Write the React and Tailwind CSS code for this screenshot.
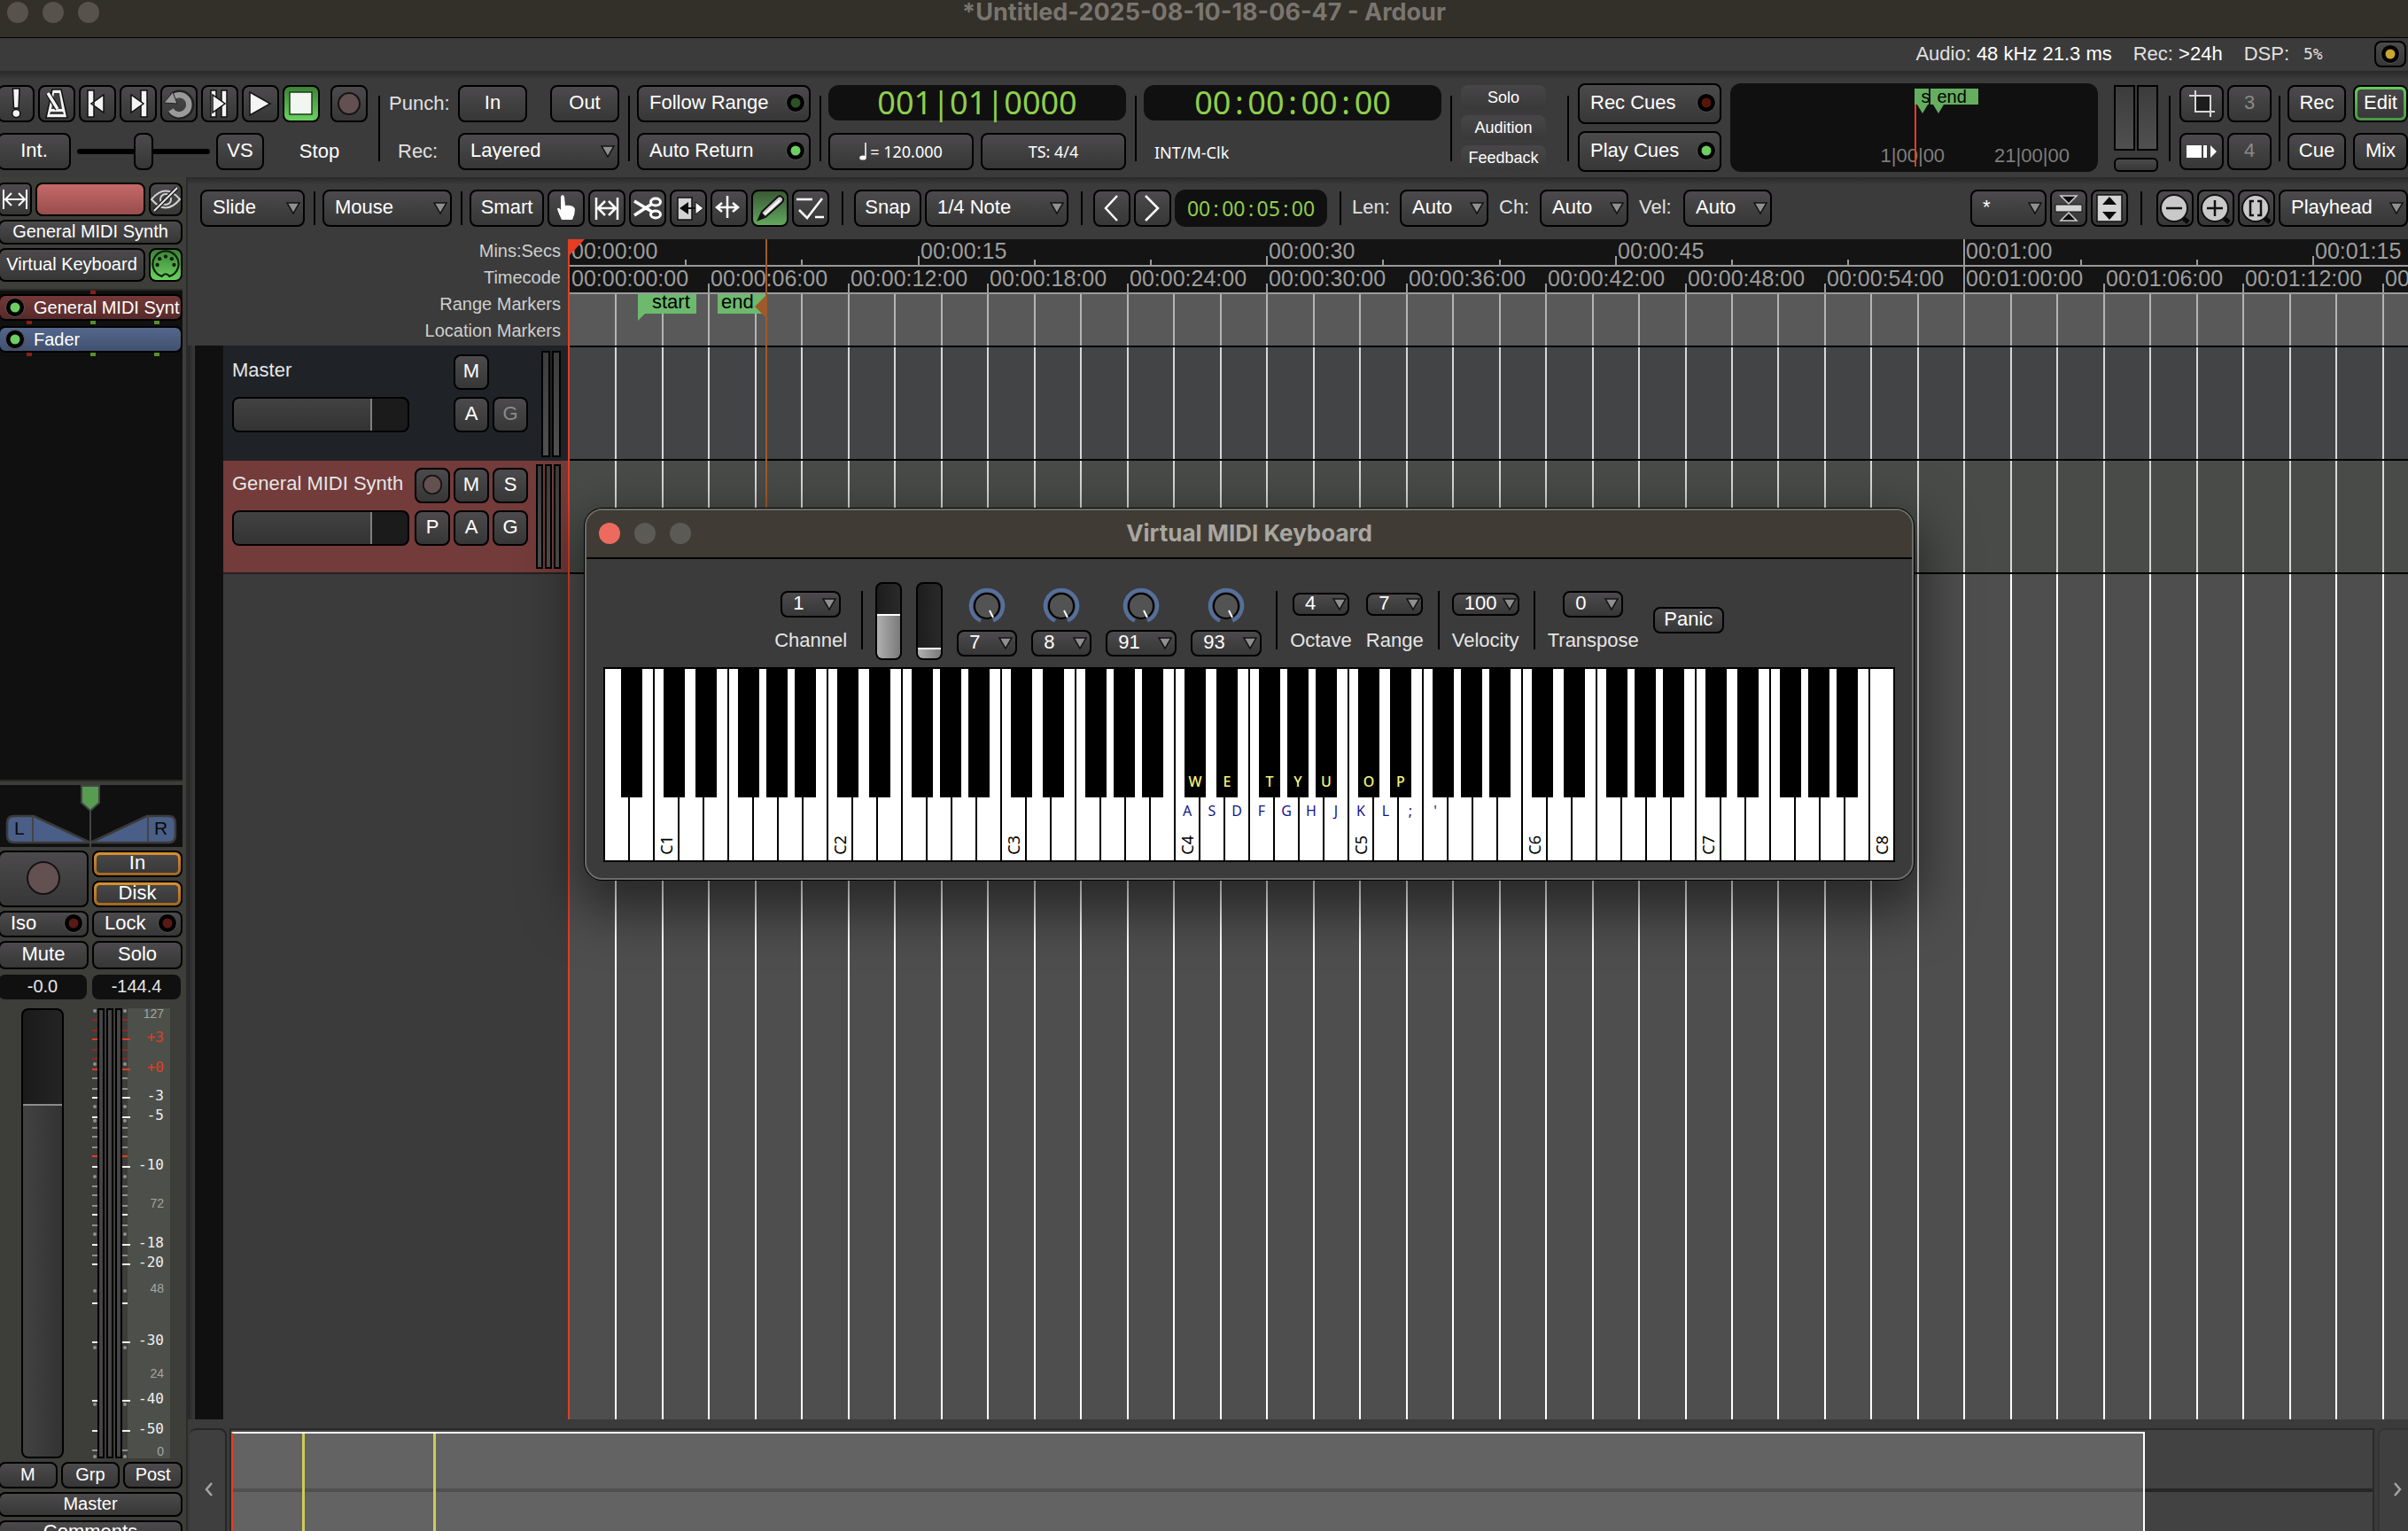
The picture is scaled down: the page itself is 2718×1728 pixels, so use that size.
import React from "react";

const cx = (...c) => c.filter(Boolean).join(" ");

const face = "border-2 border-black bg-linear-to-b from-[#4c4a4c] to-[#373737] text-white";

function Btn({ className = "", children, ...rest }) {
  return (
    <button className={cx(face, "flex shrink-0 items-center justify-center rounded-lg pb-0.5 text-[22px] leading-6", className)} {...rest}>
      {children}
    </button>
  );
}

function Pick({ label, value, className = "", pad = "pl-3", tri = "right-1" }) {
  return (
    <div className={cx("relative shrink-0", className)}>
      <select
        aria-label={label}
        defaultValue={value}
        className={cx(face, "block h-full w-full appearance-none rounded-lg pb-0.5 text-[22px] leading-5", pad)}
      >
        <option>{value}</option>
      </select>
      <svg viewBox="0 0 18 16" className={cx("pointer-events-none absolute top-1/2 h-4 w-[18px] -translate-y-1/2", tri)}>
        <path d="M2 2H16L9 14Z" fill="#8f8f8f" stroke="#141414" strokeWidth="1.5" />
      </svg>
    </div>
  );
}

const Sep = ({ className = "" }) => <div className={cx("w-0.5 shrink-0 bg-black", className)} />;

const Led = ({ color }) => (
  <svg viewBox="0 0 22 22" className="h-[22px] w-[22px] shrink-0">
    <circle cx="11" cy="11" r="10.5" fill="#000" stroke="#555" strokeWidth="1" />
    <circle cx="11" cy="11" r="5.5" fill={color} />
  </svg>
);

const Icon = ({ children, className = "h-[42px] w-[42px]", box = "0 0 42 42" }) => (
  <svg viewBox={box} className={cx("shrink-0", className)} fill="none">
    {children}
  </svg>
);

const IconBtn = ({ label, className = "w-[42px]", children }) => (
  <Btn aria-label={label} className={cx("h-[42px] overflow-hidden p-0!", className)}>
    {children}
  </Btn>
);

const Clock = ({ fields, sep, className, sepClass }) => (
  <div className={cx("flex items-center justify-center rounded-xl bg-[#101010] font-['Noto_Sans',sans-serif] text-[#8fcf4b]", className)}>
    {fields.map((f, i) => (
      <React.Fragment key={i}>
        {i > 0 && <span className={cx("text-center", sepClass)}>{sep}</span>}
        <span>{f}</span>
      </React.Fragment>
    ))}
  </div>
);

const RecDot = ({ r = 12, size = "h-[42px] w-[42px]" }) => (
  <Icon className={size}>
    <circle cx="21" cy="21" r={r} fill="#635051" stroke="#161214" strokeWidth="2" />
  </Icon>
);

/* ---------- top bars ---------- */

function TitleBar() {
  return (
    <header className="flex h-[43px] shrink-0 border-b border-black bg-[#332f29]">
      <div className="flex w-80 gap-4 pl-2 pt-0.5">
        {["Close", "Minimise", "Zoom"].map((n) => (
          <button key={n} aria-label={n} className="h-6 w-6 rounded-full bg-[#57534c]" />
        ))}
      </div>
      <h1 className="flex-1 text-center font-['Inter',sans-serif] text-[27px] font-bold leading-7 text-[#79756f]">
        *Untitled-2025-08-10-18-06-47 - Ardour
      </h1>
      <div className="w-80" />
    </header>
  );
}

function StatusBar() {
  return (
    <div className="flex h-[37px] shrink-0 items-center justify-end bg-[#3b3b3b] pb-0.5 text-[22px] leading-6 text-[#e0e0e0]">
      <p>
        Audio: <span className="text-white">48 kHz 21.3 ms</span>
      </p>
      <p className="ml-6">
        Rec: <span className="text-white">&gt;24h</span>
      </p>
      <p className="ml-6">DSP:</p>
      <p className="ml-4 w-8 font-['DejaVu_Sans_Mono',monospace] text-lg leading-6">5%</p>
      <Btn aria-label="Log" className="ml-12 mr-0.5 h-[30px] w-9 p-0!">
        <Led color="#c9a531" />
      </Btn>
    </div>
  );
}

function Transport() {
  const w = { fill: "#f4f4f4", stroke: "#111", strokeWidth: 1.5 };
  return (
    <div className="flex h-[120px] shrink-0 bg-linear-to-b from-[#292929] via-[#3b3b3b] via-8% to-[#3b3b3b] pt-4">
      <div className="-ml-[3px] flex shrink-0 flex-col gap-3">
        <div className="flex gap-1">
          <IconBtn label="Panic">
            <Icon>
              <path d="M17.500 4H25L24 26H18.500Z" {...w} />
              <circle cx="21.300" cy="32" r="4.500" {...w} />
            </Icon>
          </IconBtn>
          <IconBtn label="Metronome">
            <Icon>
              <path d="M9 37L16 5H26L33 37Z" {...w} />
              <path d="M18 9H24L27 27H15ZM14 30H28L29 33H13Z" fill="#3f3f3f" />
              <path d="M11 9L22 27" stroke="#111" strokeWidth="6" />
              <path d="M11 9L22 27" stroke="#f4f4f4" strokeWidth="3.500" />
            </Icon>
          </IconBtn>
          <IconBtn label="Go to start">
            <Icon>
              <path d="M10 6H17V36H10ZM28 11V31L14 21Z" {...w} />
            </Icon>
          </IconBtn>
          <IconBtn label="Go to end">
            <Icon>
              <path d="M24 6H31V36H24Z" {...w} />
              <path d="M13 11V31L27 21Z" {...w} />
            </Icon>
          </IconBtn>
          <IconBtn label="Loop">
            <Icon>
              <path d="M14 13A12 12 0 1 1 12 29" stroke="#222" strokeWidth="9" />
              <path d="M14 14A11 11 0 1 1 12 28" stroke="#9a9a9a" strokeWidth="6.500" />
              <path d="M4 20L14 8L19 21Z" fill="#9a9a9a" stroke="#222" />
            </Icon>
          </IconBtn>
          <IconBtn label="Play range">
            <Icon>
              <path d="M11 6H17V36H11Z" {...w} />
              <path d="M23 6H29V36H23Z" {...w} />
              <path d="M13 11V31L27 21Z" {...w} />
            </Icon>
          </IconBtn>
          <IconBtn label="Play">
            <Icon>
              <path d="M9 8V34L32 21Z" {...w} />
            </Icon>
          </IconBtn>
          <IconBtn label="Stop" className="w-[42px] from-[#3d8236]! to-[#6ad260]!">
            <Icon>
              <path d="M8 8H33V33H8Z" fill="#f1f7f0" stroke="#1c3a19" strokeWidth="1.500" />
            </Icon>
          </IconBtn>
          <IconBtn label="Record" className="ml-2 w-[42px]">
            <RecDot />
          </IconBtn>
        </div>
        <div className="flex items-center">
          <Btn className="h-[42px] w-[83px]">Int.</Btn>
          <div className="ml-[7px] flex h-[42px] w-[150px] items-center">
            <div className="h-1.5 flex-1 rounded-l bg-black" />
            <div className={cx(face, "h-[42px] w-[22px] rounded-lg")} />
            <div className="h-1.5 flex-1 rounded-r bg-black" />
          </div>
          <Btn className="ml-[7px] h-[42px] w-[54px]">VS</Btn>
          <span className="flex-1 pb-0.5 pl-2 text-center text-[22px] text-white">Stop</span>
        </div>
      </div>

      <Sep className="ml-3 mt-3 h-[74px]" />

      <div className="ml-[10px] flex w-[260px] shrink-0 flex-col gap-3 text-[22px] text-[#e0e0e0]">
        <div className="flex items-center justify-between">
          <span className="w-[78px] pb-0.5">Punch:</span>
          <Btn className="h-[42px] w-[78px]">In</Btn>
          <Btn className="ml-[26px] h-[42px] w-[78px]">Out</Btn>
        </div>
        <div className="flex items-center justify-between">
          <span className="pb-0.5 pl-2.5">Rec:</span>
          <Pick label="Record mode" value="Layered" className="h-[42px] w-[182px]" />
        </div>
      </div>

      <Sep className="ml-2.5 mt-3 h-[74px]" />

      <div className="ml-2 flex w-[196px] shrink-0 flex-col gap-3">
        <Btn className="h-[42px] justify-between! pl-3 pr-1">
          Follow Range <Led color="#2c5226" />
        </Btn>
        <Btn className="h-[42px] justify-between! pl-3 pr-1">
          Auto Return <Led color="#6dce62" />
        </Btn>
      </div>

      <Sep className="ml-2.5 mt-3 h-[74px]" />

      <div className="ml-2 flex w-[336px] shrink-0 flex-col gap-3.5 font-['Noto_Sans',sans-serif]">
        <Clock fields={["001", "01", "0000"]} sep="|" className="h-10 text-[36px] leading-10" sepClass="w-5" />
        <div className="flex gap-2">
          <Btn className="h-[42px] flex-1 gap-1 pt-0.5 text-lg!">
            <svg viewBox="0 0 8 20" className="h-5 w-2">
              <path d="M7 0V16" stroke="#fff" strokeWidth="1.500" />
              <ellipse cx="4" cy="17" rx="3.800" ry="2.600" fill="#fff" />
            </svg>
            = 120.000
          </Btn>
          <Btn className="h-[42px] flex-1 pt-0.5 text-lg!">TS: 4/4</Btn>
        </div>
      </div>

      <Sep className="ml-2.5 mt-3 h-[74px]" />

      <div className="ml-2 flex w-[336px] shrink-0 flex-col gap-3.5">
        <Clock fields={["00", "00", "00", "00"]} sep=":" className="h-10 text-[36px] leading-10" sepClass="w-[19px]" />
        <p className="pl-3 pt-2 font-['Noto_Sans',sans-serif] text-lg leading-7 text-white">INT/M-Clk</p>
      </div>

      <Sep className="ml-2.5 mt-3 h-[74px]" />

      <div className="ml-2.5 flex w-24 shrink-0 flex-col gap-1.5">
        {["Solo", "Audition", "Feedback"].map((t) => (
          <button key={t} className="h-7 rounded-lg bg-linear-to-b from-[#484648] to-[#393939] text-lg leading-7 text-white">
            {t}
          </button>
        ))}
      </div>

      <Sep className="ml-6 mt-3 h-[74px]" />

      <div className="-mt-0.5 ml-2.5 flex w-[162px] shrink-0 flex-col gap-2">
        <Btn className="h-[46px] justify-between! pl-3 pr-1">
          Rec Cues <Led color="#57150c" />
        </Btn>
        <Btn className="h-[46px] justify-between! pl-3 pr-1">
          Play Cues <Led color="#6dce62" />
        </Btn>
      </div>

      <div className="relative -mt-0.5 ml-2.5 h-[100px] min-w-0 flex-1 overflow-hidden rounded-xl bg-[#101010] text-xl">
        <div className="absolute bottom-2 left-1/2 -ml-[38px] flex gap-14 text-[22px] leading-5 text-[#7d7d7d]">
          <span>1|00|00</span>
          <span>21|00|00</span>
        </div>
        <div className="absolute left-1/2 top-6 h-[70px] w-0.5 bg-[#e43d23]" />
        <div className="absolute left-1/2 top-1.5 flex gap-0.5 leading-[18px] text-black">
          <div>
            <p className="h-[18px] w-4 overflow-hidden bg-[#65ae60] pl-2">s</p>
            <svg viewBox="0 0 16 10" className="h-2.5 w-4">
              <path d="M3 0H15L9 10Z" fill="#65ae60" />
            </svg>
          </div>
          <div>
            <p className="h-[18px] w-[54px] bg-[#65ae60] pl-2">end</p>
            <svg viewBox="0 0 16 10" className="h-2.5 w-4">
              <path d="M3 0H15L9 10Z" fill="#65ae60" />
            </svg>
          </div>
        </div>
      </div>

      <div className="ml-[18px] flex w-[50px] shrink-0 flex-col gap-2">
        <div className="flex h-[74px] gap-0.5">
          <div className="flex-1 border-2 border-black bg-linear-to-b from-[#3c3c3c] to-[#505050]" />
          <div className="flex-1 border-2 border-black bg-linear-to-b from-[#3c3c3c] to-[#505050]" />
        </div>
        <Btn aria-label="Peak" className="h-4 rounded-md!" />
      </div>

      <Sep className="ml-3 mt-3 h-[74px]" />

      <div className="ml-2.5 grid shrink-0 grid-cols-[50px_50px] content-start gap-x-1 gap-y-3">
        <IconBtn label="Trim layout" className="w-full">
          <Icon>
            <path d="M14 12H32V30H14Z" fill="#1d1d1d" />
            <path d="M14 6V30H36M7 12H31V36" stroke="#d8d8d8" strokeWidth="2" />
          </Icon>
        </IconBtn>
        <Btn className="h-[42px] w-full text-[#8a8a8a]!">3</Btn>
        <IconBtn label="Clip view" className="w-full">
          <Icon>
            <path d="M4 14H21V28H4ZM23 14H27V28H23ZM31 14L38 21L31 28Z" fill="#fff" />
          </Icon>
        </IconBtn>
        <Btn className="h-[42px] w-full text-[#8a8a8a]!">4</Btn>
      </div>

      <Sep className="ml-2 mt-3 h-[74px]" />

      <div className="ml-2 grid shrink-0 grid-cols-[66px_62px] content-start gap-x-2 gap-y-3">
        <Btn className="h-[42px] w-full">Rec</Btn>
        <Btn className="h-[42px] w-full from-[#66c95c]! to-[#4a9642]! p-[3px]!">
          <span className="flex h-full w-full items-center justify-center rounded bg-linear-to-b from-[#484648] to-[#393939] pb-0.5">Edit</span>
        </Btn>
        <Btn className="h-[42px] w-full">Cue</Btn>
        <Btn className="h-[42px] w-full">Mix</Btn>
      </div>
    </div>
  );
}

/* ---------- mixer strip ---------- */

const TICKS = [
  [12, "#8c2a22", 0], [24, "#8c2a22", 0], [34, "#e43d23", 1], [46, "#8c2a22", 0], [56, "#8c2a22", 0], [68, "#e43d23", 1],
  [78, "#909090", 0], [90, "#909090", 0], [100, "#f0f0f0", 1], [122, "#f0f0f0", 1], [134, "#909090", 0], [144, "#909090", 0],
  [156, "#909090", 0], [166, "#e43d23", 0], [178, "#f0f0f0", 1], [200, "#909090", 0], [210, "#909090", 0], [222, "#909090", 0],
  [232, "#f0f0f0", 0], [244, "#909090", 0], [266, "#f0f0f0", 1], [278, "#909090", 0], [288, "#f0f0f0", 1], [332, "#f0f0f0", 0],
  [376, "#f0f0f0", 1], [442, "#f0f0f0", 1], [476, "#f0f0f0", 1], [498, "#909090", 0],
];
const DOTS = [3, 63, 111, 127, 190, 255, 319, 383, 447, 506];
const DB = [
  ["+3", 34, "#e43d23"], ["+0", 68, "#e43d23"], ["-3", 100, "#f0f0f0"], ["-5", 122, "#f0f0f0"], ["-10", 178, "#f0f0f0"],
  ["-18", 266, "#f0f0f0"], ["-20", 288, "#f0f0f0"], ["-30", 376, "#f0f0f0"], ["-40", 442, "#f0f0f0"], ["-50", 476, "#f0f0f0"],
];
const MIDI = [["127", 6], ["72", 220], ["48", 316], ["24", 412], ["0", 500]];

function MeterScale() {
  return (
    <svg viewBox="0 0 88 508" className="h-[508px] w-[88px] shrink-0 overflow-visible">
      <rect x="40" width="48" height="508" fill="#4d4f4a" />
      {[6, 16, 26].map((x) => (
        <g key={x}>
          <rect x={x} width="8" height="508" fill="#000" />
          <rect x={x + 2} y="2" width="4" height="504" fill="#464446" />
        </g>
      ))}
      {TICKS.map(([y, c, major]) => (
        <g key={y} fill={c}>
          <rect x="0" y={y} width="6" height="2" />
          <rect x="34" y={y} width={major ? 9 : 6} height="2" />
        </g>
      ))}
      {DOTS.map((y) => (
        <g key={y} fill="#909090">
          <circle cx="3" cy={y} r="2" />
          <circle cx="37" cy={y} r="2" />
        </g>
      ))}
      <g textAnchor="end" fontFamily="DejaVu Sans Mono, monospace" fontSize="16">
        {DB.map(([t, y, c]) => (
          <text key={t} x="81" y={y + 4} fill={c}>{t}</text>
        ))}
      </g>
      <g textAnchor="end" fontFamily="Liberation Sans, sans-serif" fontSize="14" fill="#a5a6a2">
        {MIDI.map(([t, y]) => (
          <text key={t} x="81" y={y + 5}>{t}</text>
        ))}
      </g>
    </svg>
  );
}

const Pins = ({ red = [], green = [] }) => (
  <svg viewBox="0 0 206 4" className="h-1 w-[206px]">
    {red.map((x) => <rect key={x} x={x} width="6" height="4" fill="#8b1f17" />)}
    {green.map((x) => <rect key={x} x={x} width="6" height="4" fill="#5a8f2a" />)}
  </svg>
);

function MixerStrip() {
  return (
    <aside className="flex w-[212px] shrink-0 flex-col border-r-2 border-[#2b2b2b] bg-[#3d3e39] pr-1 pt-1.5">
      <div className="-ml-0.5 flex h-[38px] gap-1">
        <IconBtn label="Strip width" className="h-full! w-[38px] rounded-md!">
          <Icon>
            <path d="M8 10V32M34 10V32M10 21H32M17 14L10 21L17 28M25 14L32 21L25 28" stroke="#fff" strokeWidth="2" />
          </Icon>
        </IconBtn>
        <button aria-label="Track colour" className="flex-1 rounded-lg border-2 border-black bg-linear-to-b from-[#c56a69] to-[#984d4c]" />
        <IconBtn label="Hide strip" className="h-full! w-[38px]">
          <Icon>
            <path d="M5 21Q21 2 37 21Q21 40 5 21Z" stroke="#d0d0d0" strokeWidth="2" />
            <circle cx="21" cy="21" r="6" stroke="#d0d0d0" strokeWidth="2" />
            <path d="M8 34L34 8" stroke="#222" strokeWidth="5" />
            <path d="M8 34L34 8" stroke="#e6e6e6" strokeWidth="2" />
          </Icon>
        </IconBtn>
      </div>
      <Btn className="-ml-0.5 mt-1 h-7 text-xl!">General MIDI Synth</Btn>
      <div className="-ml-0.5 mt-1 flex h-[38px] gap-1">
        <Btn className="flex-1 whitespace-nowrap text-xl!">Virtual Keyboard</Btn>
        <IconBtn label="MIDI input" className="h-full! w-[38px] from-[#3d8236]! to-[#6ad260]!">
          <Icon className="h-[36px] w-[36px]">
            <path d="M16 36A17 17 0 1 1 26 36Q21 30 16 36Z" stroke="#0c2009" strokeWidth="2.500" />
            <g fill="#0c2009">
              <circle cx="10" cy="21" r="2.500" />
              <circle cx="13" cy="13" r="2.500" />
              <circle cx="21" cy="10" r="2.500" />
              <circle cx="29" cy="13" r="2.500" />
              <circle cx="32" cy="21" r="2.500" />
            </g>
          </Icon>
        </IconBtn>
      </div>

      <div className="mt-2 flex min-h-0 flex-1 flex-col border-y-2 border-[#2a2a28] bg-[#101010]">
        <Pins red={[102]} />
        <button className="-ml-0.5 flex h-[30px] items-center gap-2.5 overflow-hidden whitespace-nowrap rounded-lg border-2 border-black bg-linear-to-b from-[#743837] to-[#572a2a] pl-1.5 text-xl leading-6 text-white">
          <Led color="#6dce62" /> General MIDI Synt
        </button>
        <Pins red={[30]} green={[102, 174]} />
        <button className="-ml-0.5 mt-0.5 flex h-[30px] items-center gap-2.5 rounded-lg border-2 border-black bg-linear-to-b from-[#54678c] to-[#40506f] pl-1.5 text-xl leading-6 text-white">
          <Led color="#6dce62" /> Fader
        </button>
        <Pins red={[30]} green={[102, 174]} />
      </div>

      <svg viewBox="0 0 206 70" className="mt-1 h-[70px] w-[206px] shrink-0 bg-[#101010]">
        <path d="M38 35H16Q8 35 8 43V57Q8 65 16 65H102ZM166 35H190Q198 35 198 43V57Q198 65 190 65H102Z" fill="#4a5f87" stroke="#3b3b3b" strokeWidth="2.500" />
        <path d="M37 35V64M167 35V64M102 28V70" stroke="#444" strokeWidth="2" />
        <path d="M92 1H112V20L102 29L92 20Z" fill="#569c51" stroke="#444" strokeWidth="2" />
        <g fontFamily="Liberation Sans, sans-serif" fontSize="21" fill="#0a0a0a">
          <text x="16" y="56">L</text>
          <text x="174" y="56">R</text>
        </g>
      </svg>

      <div className="-ml-0.5 mt-1 grid grid-cols-2 gap-1">
        <Btn aria-label="Record enable" className="h-16">
          <RecDot r={18} />
        </Btn>
        <div className="flex flex-col justify-between">
          {["In", "Disk"].map((t) => (
            <Btn key={t} className="h-[30px] from-[#d8912f]! to-[#a36720]! p-[3px]!">
              <span className="h-5 w-full rounded bg-linear-to-b from-[#484648] to-[#393939] leading-[18px]">{t}</span>
            </Btn>
          ))}
        </div>
        <Btn className="h-[30px] justify-between! pl-3 pr-1">
          Iso <Led color="#571a17" />
        </Btn>
        <Btn className="h-[30px] justify-between! pl-3 pr-1">
          Lock <Led color="#571a17" />
        </Btn>
        <Btn className="h-8">Mute</Btn>
        <Btn className="h-8">Solo</Btn>
      </div>
      <div className="-ml-0.5 mt-1.5 grid grid-cols-2 gap-1.5 pr-0.5">
        {["-0.0", "-144.4"].map((t) => (
          <output key={t} className="h-7 rounded-lg bg-[#101010] text-center text-xl leading-[26px] text-[#e6e6e6]">
            {t}
          </output>
        ))}
      </div>

      <div className="mt-2.5 flex shrink-0 pl-6">
        <div className="h-[508px] w-12 overflow-hidden rounded-lg border-2 border-black bg-linear-to-r from-[#1a1a1a] to-[#242424]">
          <div className="mt-[106px] h-full border-t-2 border-[#8c8c8c] bg-linear-to-r from-[#424242] to-[#333333]" />
        </div>
        <div className="ml-8">
          <MeterScale />
        </div>
      </div>

      <div className="-ml-0.5 mt-1 grid shrink-0 grid-cols-3 gap-1">
        <Btn className="h-[30px] text-xl!">M</Btn>
        <Btn className="h-[30px] text-xl!">Grp</Btn>
        <Btn className="h-[30px] text-xl!">Post</Btn>
      </div>
      <Btn className="-ml-0.5 mt-1 h-7 text-xl!">Master</Btn>
      <Btn className="-mb-4 -ml-0.5 mt-1 h-7">Comments</Btn>
    </aside>
  );
}

/* ---------- editor ---------- */

function Toolbar() {
  const s = { stroke: "#fff", strokeWidth: 2.5 };
  return (
    <div className="flex h-[70px] shrink-0 items-start bg-linear-to-b from-[#292929] via-[#3b3b3b] via-12% to-[#3b3b3b] pl-3.5 pt-3.5 text-[22px] leading-10 text-[#e0e0e0]">
      <Pick label="Edit mode" value="Slide" className="h-[42px] w-[118px]" />
      <Sep className="ml-2.5 mt-0.5 h-[38px]" />
      <Pick label="Edit point" value="Mouse" className="ml-2 h-[42px] w-[146px]" />
      <Sep className="ml-2.5 mt-0.5 h-[38px]" />
      <div className="ml-2 flex gap-1">
        <Btn className="h-[42px] w-[84px]">Smart</Btn>
        <IconBtn label="Grab">
          <Icon>
            <path d="M15 8Q17 4 19 8L20 18Q29 17 31 22Q31 28 28 34H16Q13 28 11 22Q12 19 15 23Z" fill="#fff" />
          </Icon>
        </IconBtn>
        <IconBtn label="Range">
          <Icon>
            <path d="M9 9V34M33 9V34M11 21H31M19 13L11 21L19 29M23 13L31 21L23 29" {...s} />
          </Icon>
        </IconBtn>
        <IconBtn label="Cut">
          <Icon>
            <path d="M6 13L26 25M6 29L26 16" stroke="#fff" strokeWidth="3.500" />
            <ellipse cx="30" cy="14" rx="5.500" ry="4" stroke="#fff" strokeWidth="3" />
            <ellipse cx="30" cy="28" rx="5.500" ry="4" stroke="#fff" strokeWidth="3" />
          </Icon>
        </IconBtn>
        <IconBtn label="Stretch">
          <Icon>
            <path d="M9 9H25V34H9Z" fill="#d4d4d4" stroke="#111" strokeWidth="1.500" />
            <path d="M20 21H30" stroke="#111" strokeWidth="2" />
            <path d="M11 21L21 14V28Z" fill="#0c0c0c" />
            <path d="M29 14V28L38 21Z" fill="#fff" stroke="#111" />
          </Icon>
        </IconBtn>
        <IconBtn label="Audition">
          <Icon>
            <path d="M19 7V32M8 20H30M13 15L7 20L13 25M25 15L31 20L25 25" {...s} />
          </Icon>
        </IconBtn>
        <IconBtn label="Draw" className="w-[42px] from-[#3a5a34]! to-[#62a85e]!">
          <Icon>
            <path d="M8 34L12 25L30 8Q33 6 36 10Q37 12 34 15L16 31Z" fill="#c9c9c9" stroke="#111" strokeWidth="2" />
            <path d="M15 28L32 12" stroke="#fff" strokeWidth="2" />
            <path d="M8 34L12 26L16 30Z" fill="#111" />
          </Icon>
        </IconBtn>
        <IconBtn label="Edit contents">
          <Icon>
            <path d="M5 11H23M8 23L17 32L34 10M26 31H36" {...s} />
          </Icon>
        </IconBtn>
      </div>
      <Sep className="ml-3.5 mt-0.5 h-[38px]" />
      <Btn className="ml-3 h-[42px] w-[76px]">Snap</Btn>
      <Pick label="Grid" value="1/4 Note" className="ml-1 h-[42px] w-[162px]" />
      <Sep className="ml-3.5 mt-0.5 h-[38px]" />
      <div className="ml-3 flex gap-1">
        <IconBtn label="Nudge back">
          <Icon>
            <path d="M27 7L14 21L27 35" {...s} />
          </Icon>
        </IconBtn>
        <IconBtn label="Nudge forward">
          <Icon>
            <path d="M13 7L27 21L13 35" {...s} />
          </Icon>
        </IconBtn>
        <Clock fields={["00", "00", "05", "00"]} sep=":" className="h-[42px] w-[172px] text-[23px] leading-[42px]" sepClass="w-[13px]" />
      </div>
      <Sep className="ml-3.5 mt-0.5 h-[38px]" />
      <span className="ml-3 w-[42px]">Len:</span>
      <Pick label="Length" value="Auto" className="ml-3 h-[42px] w-[100px]" />
      <span className="ml-3 w-[34px]">Ch:</span>
      <Pick label="Channel" value="Auto" className="ml-3 h-[42px] w-[100px]" />
      <span className="ml-3 w-[38px]">Vel:</span>
      <Pick label="Velocity" value="Auto" className="ml-3 h-[42px] w-[100px]" />

      <Pick label="Visible tracks" value="*" className="ml-auto h-[42px] w-[86px]" />
      <div className="ml-1 flex gap-1">
        <IconBtn label="Shrink tracks">
          <Icon>
            <path d="M6 17H36V25H6Z" fill="#d4d4d4" stroke="#111" />
            <path d="M12 7H30L21 16ZM12 35H30L21 26Z" fill="#0c0c0c" stroke="#cfcfcf" strokeWidth="1.500" />
          </Icon>
        </IconBtn>
        <IconBtn label="Expand tracks">
          <Icon>
            <path d="M7 6H35V36H7Z" fill="#d4d4d4" stroke="#111" strokeWidth="1.500" />
            <path d="M13 17H29L21 8ZM13 25H29L21 34Z" fill="#0c0c0c" />
          </Icon>
        </IconBtn>
      </div>
      <Sep className="ml-3.5 mt-0.5 h-[38px]" />
      <div className="ml-4 flex gap-1">
        {[
          ["Zoom out", "M11 21H29"],
          ["Zoom in", "M11 21H29M20 12V30"],
          ["Zoom to session", "M18 13H14V29H18M22 13H26V29H22"],
        ].map(([n, d]) => (
          <IconBtn key={n} label={n}>
            <Icon>
              <path d="M29 31L36 37" stroke="#0a0a0a" strokeWidth="5" />
              <circle cx="20" cy="21" r="15" fill="#c9c9c9" stroke="#111" strokeWidth="2" />
              <path d={d} stroke="#111" strokeWidth="2.500" />
            </Icon>
          </IconBtn>
        ))}
      </div>
      <Pick label="Zoom focus" value="Playhead" className="ml-1 h-[42px] w-[146px]" />
    </div>
  );
}

const ORIGIN = 2;
const PPS = 26.24;
const at = (sec) => Math.round(ORIGIN + sec * PPS);
const steps = (n, by) => Array.from({ length: n }, (_, i) => i * by);
const two = (n) => String(n).padStart(2, "0");
const hms = (s) => `00:${two(Math.floor(s / 60))}:${two(s % 60)}`;

const Grid = ({ color }) =>
  steps(56, 2).slice(1).map((s) => (
    <div key={s} className={cx("absolute inset-y-0 w-0.5", color)} style={{ left: at(s) - 1 }} />
  ));

function Ruler({ every, minor, suffix = "" }) {
  return (
    <div className="relative h-[31px] shrink-0 overflow-hidden border-b-2 border-[#9a9a9a] bg-[#141414]">
      {steps(Math.ceil(79 / minor), minor).map((s) => {
        const major = s % every === 0;
        const h = s > 0 && s % 60 === 0 ? "h-full" : major ? "h-2.5" : "h-1.5";
        return (
          <React.Fragment key={s}>
            {s > 0 && <div className={cx("absolute bottom-0 w-0.5 bg-[#9a9a9a]", h)} style={{ left: at(s) - 1 }} />}
            {major && (
              <span className="absolute top-0 text-[25px] leading-[26px] text-[#9d9d9d]" style={{ left: at(s) + 2 }}>
                {hms(s) + suffix}
              </span>
            )}
          </React.Fragment>
        );
      })}
    </div>
  );
}

function TrackHeader({ name, color, bars, children }) {
  return (
    <div className={cx("flex pb-1 pl-2.5 pr-2 pt-1", color)}>
      <div className="flex w-[200px] flex-col gap-2 pt-1">
        <h2 className="h-10 whitespace-nowrap text-[22px] leading-9 text-[#e6e6e6]">{name}</h2>
        <div className="flex h-10 overflow-hidden rounded-lg border-2 border-black bg-[#1b1b1b]">
          <div className="w-[156px] border-r-2 border-[#808080] bg-linear-to-b from-[#424242] to-[#333]" />
        </div>
      </div>
      <div className="ml-1.5 grid grid-cols-[40px_40px_40px] content-start gap-x-1 gap-y-2 pt-1">{children}</div>
      <div className="ml-auto flex gap-0.5">
        {steps(bars, 1).map((i) => (
          <div key={i} className={cx("border-2 border-black bg-linear-to-b from-[#3c3c3c] to-[#505050]", bars === 2 ? "w-2.5" : "w-2")} />
        ))}
      </div>
    </div>
  );
}

function Editor() {
  return (
    <div className="flex min-h-0 flex-1 bg-[#3b3b3b]">
      <div className="flex w-[429px] shrink-0 flex-col">
        <div className="pr-2 text-right text-xl leading-[30px] text-[#cfcfcf]">
          <p className="-mt-0.5">Mins:Secs</p>
          <p>Timecode</p>
          <p>Range Markers</p>
          <p>Location Markers</p>
          <div className="h-0.5" />
        </div>
        <div className="flex flex-1">
          <div className="w-2 bg-linear-to-r from-[#262626] to-[#3b3b3b]" />
          <div className="w-8 bg-[#101010]" />
          <div className="flex-1">
            <div className="grid grid-rows-[130px_128px]">
              <TrackHeader name="Master" color="bg-[#1f2328] pt-1.5!" bars={2}>
                <Btn className="col-start-2 h-10">M</Btn>
                <Btn className="col-start-2 h-10">A</Btn>
                <Btn className="h-10 text-[#8a8a8a]!">G</Btn>
              </TrackHeader>
              <TrackHeader name="General MIDI Synth" color="border-b-2 border-[#222] bg-[#733b3a]" bars={3}>
                <Btn aria-label="Record enable" className="h-10">
                  <RecDot r={12} size="h-10 w-9" />
                </Btn>
                <Btn className="h-10">M</Btn>
                <Btn className="h-10">S</Btn>
                <Btn className="h-10">P</Btn>
                <Btn className="h-10">A</Btn>
                <Btn className="h-10">G</Btn>
              </TrackHeader>
            </div>
          </div>
        </div>
      </div>

      <div className="relative flex min-w-0 flex-1 flex-col overflow-hidden">
        <Ruler every={15} minor={5} />
        <Ruler every={6} minor={6} suffix=":00" />
        <div className="relative h-[58px] shrink-0 bg-[#595959]">
          <Grid color="bg-[#b4b4b4]" />
          <div className="absolute left-[79px] top-0 w-[66px]">
            <p className="h-[22px] bg-[#6dba6f] pl-4 text-[22px] leading-[18px] text-black">start</p>
            <svg viewBox="0 0 8 8" className="h-2 w-2">
              <path d="M0 0H8L0 8Z" fill="#6dba6f" />
            </svg>
          </div>
          <p className="absolute left-[169px] top-0 h-[22px] w-[54px] bg-[#6dba6f] pl-1 text-[22px] leading-[18px] text-black">end</p>
          <svg viewBox="0 0 14 28" className="absolute left-[211px] top-0 h-7 w-3.5">
            <path d="M14 0V28L0 14Z" fill="#a05a2a" />
          </svg>
        </div>
        <div className="relative h-[130px] shrink-0 border-y-2 border-black bg-[#424446]">
          <Grid color="bg-[#d8d8d8]" />
        </div>
        <div className="relative h-32 shrink-0 border-b-2 border-black bg-[#484b47]">
          <Grid color="bg-[#d8d8d8]" />
        </div>
        <div className="relative flex-1 bg-[#4e4e4e]">
          <Grid color="bg-white" />
        </div>
        <svg viewBox="0 0 20 20" className="absolute left-0 top-0 h-5 w-5">
          <path d="M0 0H19L0 20Z" fill="#e43d23" />
        </svg>
        <div className="absolute inset-y-0 left-0 w-0.5 bg-[#e43d23]" />
        <div className="absolute left-[223px] top-0 h-[378px] w-0.5 bg-[#a05a2a]" />
      </div>
    </div>
  );
}

function Summary() {
  return (
    <div className="flex h-[126px] shrink-0 bg-[#3b3b3b] pt-2.5">
      <button aria-label="Scroll left" className="ml-0.5 flex w-[42px] items-center justify-center rounded-t-lg border-t-2 border-r-2 border-[#262626] bg-[#3f3f3f] pl-1 pt-5">
        <svg viewBox="0 0 10 16" className="h-4 w-2.5" fill="none">
          <path d="M8 1L2 8L8 15" stroke="#a5a5a5" strokeWidth="2.500" />
        </svg>
      </button>
      <div className="ml-[3px] flex min-w-0 flex-1 border-x-2 border-t-2 border-[#2a2a2a] bg-[#424242] pt-0.5">
        <div className="relative w-full">
          <div className="absolute inset-x-0 top-16 h-1 bg-[#262626]" />
          <div className="absolute inset-y-0 left-0 w-[2160px] max-w-full border-l-2 border-r-2 border-t-2 border-t-white border-r-white border-l-[#e43d23] bg-[#636363]">
            <div className="mt-[62px] h-1 bg-[#505050]" />
          </div>
          <div className="absolute bottom-0 left-[80px] top-0.5 w-[3px] bg-[#cfca57]" />
          <div className="absolute bottom-0 left-[228px] top-0.5 w-[3px] bg-[#cfca57]" />
        </div>
      </div>
      <button aria-label="Scroll right" className="ml-1 flex w-[34px] items-center justify-center rounded-tl-lg border-l-2 border-t-2 border-[#353535] bg-[#3f3f3f] pl-2 pt-5">
        <svg viewBox="0 0 10 16" className="h-4 w-2.5" fill="none">
          <path d="M2 1L8 8L2 15" stroke="#a5a5a5" strokeWidth="2.500" />
        </svg>
      </button>
    </div>
  );
}

/* ---------- virtual keyboard window ---------- */

const Knob = () => (
  <svg viewBox="0 0 42 42" className="h-[42px] w-[42px]" fill="none">
    <path d="M14 37.500A18 18 0 1 1 28 37.500" stroke="#566f9b" strokeWidth="4.500" />
    <circle cx="21" cy="21" r="14" fill="#535353" stroke="#000" strokeWidth="2" />
    <path d="M24 26L28 34" stroke="#fff" strokeWidth="2" />
  </svg>
);

const Labeled = ({ label, value, width, small }) => (
  <div className="flex flex-col items-center pt-2.5">
    <div className="flex h-[30px] items-center">
      <Pick label={label} value={value} className={cx(width, small ? "h-[26px]" : "h-[30px]")} tri={small ? "right-0.5" : "right-1"} />
    </div>
    <span className="mt-3.5 text-[22px] leading-6 text-[#e6e6e6]">{label}</span>
  </div>
);

const Wheel = ({ label, level }) => (
  <div role="slider" aria-label={label} aria-valuenow={0} className="flex h-[88px] w-[30px] flex-col justify-end overflow-hidden rounded-lg border-2 border-black bg-linear-to-r from-[#1d1d1d] to-[#2a2a2a]">
    <div className={cx("border-t-2 border-white bg-linear-to-r from-[#b0b0b0] to-[#7a7a7a]", level)} />
  </div>
);

const KEY = 28;
const SHARPS = [[11, "C#"], [47, "D#"], [95, "F#"], [127, "G#"], [159, "A#"]];
const BLACK = [
  { x: 19, n: "A#0" },
  ...steps(7, 1).flatMap((o) => SHARPS.map(([dx, n]) => ({ x: 2 * KEY + o * 7 * KEY + dx, n: n + (o + 1) }))),
];
const HINT = { "C#4": "W", "D#4": "E", "F#4": "T", "G#4": "Y", "A#4": "U", "C#5": "O", "D#5": "P" };
const WHITE_HINT = "ASDFGHJKL;'";

function Keyboard() {
  return (
    <div className="relative mx-[19px] flex h-[220px] w-[1458px] border-2 border-r-0 border-black bg-white font-['Noto_Sans',sans-serif]">
      {steps(52, 1).map((i) => {
        const isC = i % 7 === 2;
        const hint = i >= 23 ? WHITE_HINT[i - 23] : undefined;
        return (
          <button key={i} aria-label={`White key ${i + 1}`} className="flex w-7 flex-col items-center justify-end border-r-2 border-black pb-1.5">
            {hint && <span className="mb-auto mt-[148px] text-base leading-6 text-[#14148c]">{hint}</span>}
            {isC && <span className="rotate-180 text-lg leading-5 text-black [writing-mode:vertical-rl]">C{(i - 2) / 7 + 1}</span>}
          </button>
        );
      })}
      {BLACK.map((k) => (
        <button
          key={k.n}
          aria-label={k.n}
          className="absolute top-0 flex h-[145px] w-6 items-end justify-center bg-black pb-1.5 text-base font-medium leading-6 text-[#f5f57a]"
          style={{ left: k.x - 1 }}
        >
          {HINT[k.n]}
        </button>
      ))}
    </div>
  );
}

function KeyboardWindow() {
  return (
    <section
      aria-label="Virtual MIDI Keyboard"
      className="absolute left-[660px] top-[574px] overflow-hidden rounded-[20px] border-2 border-[#6c6c6a] bg-[#3b3b3b] shadow-[0_0_0_1px_#000,0_24px_60px_10px_rgba(0,0,0,0.5)]"
    >
      <div className="flex h-[55px] items-center border-b-2 border-black bg-[#403c35] px-[14px] pb-0.5">
        <div className="flex w-32 gap-4">
          <button aria-label="Close" className="h-6 w-6 rounded-full bg-[#ed6a5e]" />
          <button aria-label="Minimise" className="h-6 w-6 rounded-full bg-[#5c5a54]" />
          <button aria-label="Zoom" className="h-6 w-6 rounded-full bg-[#5c5a54]" />
        </div>
        <h2 className="flex-1 text-center font-['Inter',sans-serif] text-[26px] font-bold leading-8 text-[#a9a6a0]">Virtual MIDI Keyboard</h2>
        <div className="w-32" />
      </div>
      <div className="flex justify-center gap-4 pb-2 pt-[26px]">
        <Labeled label="Channel" value="1" width="w-[68px]" />
        <Sep className="-mr-0.5 mt-2.5 h-[66px]" />
        <Wheel label="Pitch bend" level="h-[50px]" />
        <Wheel label="Modulation" level="h-3" />
        {[["7", "w-[68px]"], ["8", "w-[68px]"], ["91", "w-20"], ["93", "w-20"]].map(([v, w]) => (
          <div key={v} className="flex flex-col items-center gap-1.5 pt-1.5">
            <Knob />
            <Pick label={`Controller ${v}`} value={v} className={cx("h-[30px]", w)} />
          </div>
        ))}
        <Sep className="-mr-0.5 mt-2.5 h-[66px]" />
        <Labeled label="Octave" value="4" width="w-16" small />
        <Labeled label="Range" value="7" width="w-16" small />
        <Sep className="-mr-0.5 mt-2.5 h-[66px]" />
        <Labeled label="Velocity" value="100" width="w-[76px]" small />
        <Sep className="-mr-0.5 mt-2.5 h-[66px]" />
        <Labeled label="Transpose" value="0" width="w-[68px]" />
        <Btn className="mt-7 h-[30px] w-20">Panic</Btn>
      </div>
      <Keyboard />
      <div className="h-[18px]" />
    </section>
  );
}

export default function App() {
  return (
    <div className="relative flex h-screen w-full flex-col overflow-hidden bg-[#3b3b3b] font-['Liberation_Sans',sans-serif]">
      <TitleBar />
      <StatusBar />
      <Transport />
      <div className="flex min-h-0 flex-1">
        <MixerStrip />
        <main className="flex min-w-0 flex-1 flex-col">
          <Toolbar />
          <Editor />
          <Summary />
        </main>
      </div>
      <KeyboardWindow />
    </div>
  );
}
